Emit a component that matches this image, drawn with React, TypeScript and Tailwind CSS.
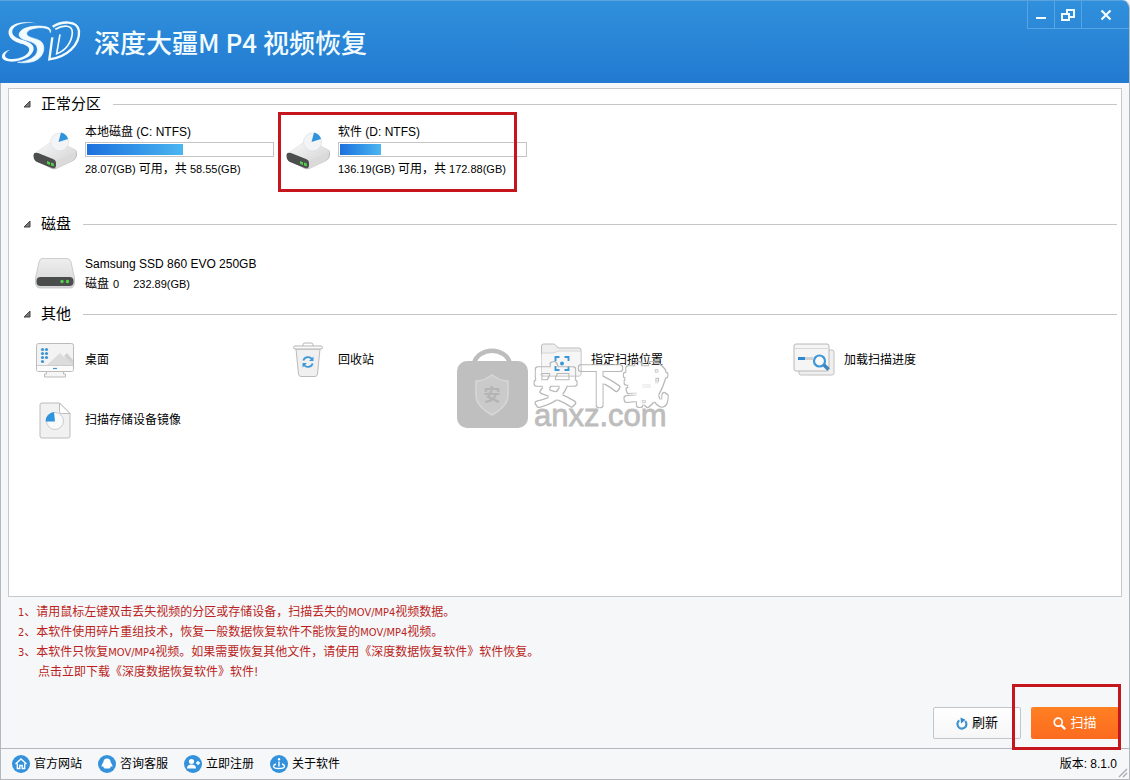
import React from 'react';

interface SectionProps {
  title: string;
  className?: string;
  children: React.ReactNode;
}

interface PartitionProps {
  name: string;
  free: string;
  total: string;
  percent: number;
  marked?: boolean;
}

const partitions: PartitionProps[] = [
  { name: '本地磁盘 (C: NTFS)', free: '28.07(GB)', total: '58.55(GB)', percent: 52 },
  { name: '软件 (D: NTFS)', free: '136.19(GB)', total: '172.88(GB)', percent: 22, marked: true },
];

const Small = ({ children }: { children: React.ReactNode }) => (
  <span className="text-[11px] leading-4">{children}</span>
);

const Logo = () => (
  <svg width="82" height="46" viewBox="0 0 246 138" className="shrink-0" fill="#f2fcff" aria-hidden="true">
    <path d="M109 13C83 7 50 8 34 22C20 35 24 55 42 65C50 70 60 73 70 76C84 81 91 88 86 98C79 111 58 119 39 120C23 121 12 116 16 106C18 100 24 96 30 92C14 95 4 105 6 115C9 127 30 130 49 127C76 123 99 108 101 91C102 77 90 70 75 65C58 60 43 55 38 45C33 32 43 20 62 15C77 11 94 12 109 13Z" />
    <path
      d="M151 41C155 30 147 24 130 22C103 19 70 24 60 39C52 52 62 59 79 64C101 70 114 77 112 95C110 113 87 127 53 130C83 134 110 129 123 112C135 96 134 75 121 66C111 59 96 58 87 53C76 47 78 37 93 31C112 24 137 25 145 31C149 34 150 37 151 41Z"
      stroke="#f2fcff"
      strokeWidth="2"
    />
    <g fill="none" stroke="#f2fcff">
      <path d="M158 23C184 7 232 2 237 36C240 78 200 115 148 121L157 55" strokeWidth="7" />
      <path d="M166 31C190 17 218 17 217 42C215 70 197 95 170 104L180 46" strokeWidth="5" />
    </g>
  </svg>
);

const PartitionIcon = () => (
  <svg width="44" height="38" viewBox="0 0 44 38" aria-hidden="true">
    <defs>
      <linearGradient id="driveTop" x1="0" y1="0" x2="1" y2="1">
        <stop offset="0" stopColor="#fafafa" />
        <stop offset="1" stopColor="#d2d2d2" />
      </linearGradient>
    </defs>
    <path d="M2 21L18 10Q21 8 25 9L41 17Q44 18 44 21V24Q43 27 40 29L23 37Q20 38 17 36L3 29Q1 27 1 24Z" fill="#bdbdbd" />
    <path d="M2 21L18 10Q21 8 25 9L41 17Q44 19 43 22L23 32Q20 33 18 31L4 24Q2 23 2 21Z" fill="url(#driveTop)" />
    <path d="M23 29L43 20V24Q42 27 39 29L23 37Z" fill="#dadada" />
    <path d="M0.500 23Q0.500 20 5 21L20 27Q23 28 23 31V34Q22 37 19 36L4 30Q0.500 28 0.500 24Z" fill="#4b4e4c" />
    <path d="M14 29l3 1.200v2.800l-3-1.200zM18 30.600l2.800 1v2.800l-2.800-1z" fill="#4fd14b" />
    <circle cx="26.500" cy="10" r="9" fill="#f3f4f5" stroke="#dcdcdc" strokeWidth="0.700" />
    <path d="M25.500 10L28 0.500Q34 2 35 7Z" fill="#2f94dc" />
  </svg>
);

const DiskIcon = () => (
  <svg width="44" height="32" viewBox="0 0 44 32" aria-hidden="true">
    <defs>
      <linearGradient id="diskTop" x1="0" y1="0" x2="0" y2="1">
        <stop offset="0" stopColor="#eeeeee" />
        <stop offset="1" stopColor="#d5d5d5" />
      </linearGradient>
    </defs>
    <path d="M9 0.500H34Q37 0.500 38 4L41.500 20V25Q41 30 37 30H7Q3 30 2.500 25V20L6 4Q7 0.500 9 0.500Z" fill="url(#diskTop)" stroke="#c3c3c3" strokeWidth="0.800" />
    <rect x="3.500" y="19" width="37" height="9" rx="4" fill="#4a4d4b" />
    <circle cx="29" cy="23.500" r="1.700" fill="#4fd14b" />
    <circle cx="34.500" cy="23.500" r="1.700" fill="#4fd14b" />
  </svg>
);

const DesktopIcon = () => (
  <svg width="40" height="36" viewBox="0 0 40 36" aria-hidden="true">
    <rect x="1.500" y="1.500" width="37" height="28" rx="2" fill="#f3f3f3" stroke="#bbbbbb" />
    <path d="M13 22L25 11l5 5 2-2 6 6v3H12z" fill="#dcdcdc" />
    <path d="M29 14l3-3 6 7v4z" fill="#d2d2d2" />
    <path d="M2 24h36v4q0 1-1 1H3q-1 0-1-1z" fill="#fbfbfb" />
    <path d="M2 23.500h36" stroke="#cccccc" />
    <path d="M18 26.500h4" stroke="#3d97d6" strokeWidth="1.200" />
    <path d="M11.500 30v2h-2v3h21v-3h-2v-2" fill="#f5f5f5" stroke="#bbbbbb" />
    <g fill="#3d97d6">
      <circle cx="7.500" cy="7.500" r="1.600" />
      <circle cx="11.500" cy="7.500" r="1.600" />
      <circle cx="7.500" cy="11.500" r="1.600" />
      <circle cx="11.500" cy="11.500" r="1.600" />
      <circle cx="7.500" cy="15.500" r="1.600" />
      <circle cx="11.500" cy="15.500" r="1.600" />
      <circle cx="7.500" cy="19.500" r="1.600" />
    </g>
  </svg>
);

const RecycleIcon = () => (
  <svg width="32" height="36" viewBox="0 0 32 36" aria-hidden="true">
    <path d="M11 4V2.500Q11 1 13 1h6q2 0 2 1.500V4" fill="none" stroke="#b5b5b5" />
    <path d="M4 7L6.500 32q.3 2.500 2.500 2.500h14q2.200 0 2.500-2.500L28 7z" fill="#f0f0f0" stroke="#bbbbbb" />
    <rect x="1.500" y="4" width="29" height="3" rx="1.500" fill="#fafafa" stroke="#b5b5b5" />
    <g fill="none" stroke="#3d97d6" strokeWidth="1.800">
      <path d="M11.300 18.500a5 5 0 0 1 8.700-1.500" />
      <path d="M20.700 21.500a5 5 0 0 1-8.700 1.500" />
    </g>
    <path d="M21.500 14.500v4.500h-4.500zM10.500 25.500V21H15z" fill="#3d97d6" />
  </svg>
);

const FolderIcon = () => (
  <svg width="42" height="34" viewBox="0 0 42 34" aria-hidden="true">
    <path d="M1.500 31V3q0-2 2-2h10q1.500 0 2.500 1.500l2 2.500h21q2 0 2 2v24q0 2-2 2h-36q-2 0-2-2z" fill="#eeeeee" stroke="#bcbcbc" />
    <path d="M1.500 31V12q0-2 2-2h9q2 0 3.500-1t3-1h20q2 0 2 1v22q0 2-2 2h-36q-2 0-2-2z" fill="#f6f6f6" stroke="#d6d6d6" />
    <path d="M15.500 18v-4h4M24.500 14h4v4M28.500 23v4h-4M19.500 27h-4v-4" fill="none" stroke="#3d97d6" strokeWidth="1.900" />
    <circle cx="22" cy="20.500" r="2" fill="#3d97d6" />
  </svg>
);

const ProgressIcon = () => (
  <svg width="42" height="34" viewBox="0 0 42 34" aria-hidden="true">
    <rect x="6" y="7" width="35" height="25" rx="2" fill="#efefef" stroke="#c0c0c0" />
    <rect x="1" y="1" width="35" height="27" rx="2" fill="#f5f5f5" stroke="#b8b8b8" />
    <path d="M1.500 5.500h34" stroke="#d8d8d8" />
    <path d="M5 15.500h7" stroke="#2f87cf" strokeWidth="3" />
    <path d="M12 15.500h8" stroke="#d2d2d2" strokeWidth="3" />
    <circle cx="26.500" cy="18" r="5.500" fill="#fafafa" stroke="#3d97d6" strokeWidth="2.200" />
    <path d="M31 22l4.500 4.500" stroke="#3d86bd" strokeWidth="3.600" />
  </svg>
);

const ImageFileIcon = () => (
  <svg width="32" height="37" viewBox="0 0 32 37" aria-hidden="true">
    <path d="M1 3q0-2 2-2h17.500L31 11.500V34q0 2-2 2H3q-2 0-2-2z" fill="#f1f1f1" stroke="#bcbcbc" />
    <path d="M20.500 1v8.500q0 2 2 2H31z" fill="#ffffff" stroke="#bcbcbc" />
    <circle cx="16" cy="19" r="8.500" fill="#fafafa" stroke="#c8ccd0" />
    <path d="M16 19.500H6.500A9.500 9.500 0 0 1 15 10z" fill="#2f94dc" />
  </svg>
);

const others = [
  { label: '桌面', icon: <DesktopIcon /> },
  { label: '回收站', icon: <RecycleIcon /> },
  { label: '指定扫描位置', icon: <FolderIcon /> },
  { label: '加载扫描进度', icon: <ProgressIcon /> },
  { label: '扫描存储设备镜像', icon: <ImageFileIcon /> },
];

const footerLinks = [
  {
    label: '官方网站',
    glyph: (
      <path d="M3.500 9L9 4l5.500 5M5.300 8.500v5h2.500v-3h2.400v3h2.500v-5" fill="none" stroke="#fff" strokeWidth="1.300" />
    ),
  },
  {
    label: '咨询客服',
    glyph: <path d="M9 3.500q3.500 0 3.700 4 2 2 1.800 4.300-1-.3-1.500-.6-.6 1.600-1.500 2.300H6.500Q5.600 12.800 5 11.200q-.6.400-1.500.6-.2-2.300 1.800-4.300.2-4 3.700-4z" fill="#fff" />,
  },
  {
    label: '立即注册',
    glyph: (
      <g fill="#fff">
        <circle cx="7.500" cy="6.500" r="2.600" />
        <path d="M3 13.500q0-4 4.500-4t4.500 4zM12 7.300h1.300V6h1.400v1.300H16v1.400h-1.300V10h-1.400V8.700H12z" />
      </g>
    ),
  },
  {
    label: '关于软件',
    glyph: (
      <g fill="none" stroke="#fff" strokeWidth="1.400">
        <path d="M9 6.500v5M6 9q-2.500.8-2.500 2.200 0 2.300 5.500 2.300t5.500-2.300Q14.500 9.800 12 9" />
        <circle cx="9" cy="4.300" r="0.600" fill="#fff" />
      </g>
    ),
  },
];

const Section = ({ title, className = '', children }: SectionProps) => (
  <section className={className}>
    <h2 className="flex h-5 items-center pr-1">
      <button type="button" className="flex items-center gap-2.5 pl-3 text-[15px] leading-5">
        <svg width="8" height="8" viewBox="0 0 8 8" aria-hidden="true" className="ml-0.5">
          <path d="M7 1v6H1z" fill="#777777" stroke="#444444" />
        </svg>
        {title}
      </button>
      <span className="ml-3 h-px flex-1 bg-[#c6c6c6]" />
    </h2>
    <div className="grid grid-cols-[repeat(auto-fill,253px)] pl-6">{children}</div>
  </section>
);

const Partition = ({ name, free, total, percent, marked }: PartitionProps) => (
  <div className="relative">
    <button type="button" className="flex items-center gap-2 text-left text-xs">
      <PartitionIcon />
      <span className="block">
        <span className="block leading-5">{name}</span>
        <span
          role="progressbar"
          aria-label={name}
          aria-valuenow={percent}
          className="block h-[15px] w-[189px] border border-[#c4c4c4] bg-white p-px"
        >
          <span
            className="block h-full bg-linear-to-r from-[#1d70dd] to-[#4bb5f0]"
            style={{ width: `${percent}%` }}
          />
        </span>
        <span className="mt-0.5 block leading-5">
          <Small>{free} </Small>可用，共<Small> {total}</Small>
        </span>
      </span>
    </button>
    {marked && (
      <span className="pointer-events-none absolute -top-2.5 -left-2 z-10 h-20 w-[239px] border-3 border-[#c4161c]" />
    )}
  </div>
);

const Watermark = () => (
  <div className="pointer-events-none absolute inset-0 flex items-center justify-center">
    <svg width="218" height="88" viewBox="0 0 218 88" role="img" aria-label="安下载 anxz.com">
      <defs>
        <filter id="outline" x="-10%" y="-10%" width="120%" height="120%">
          <feMorphology in="SourceGraphic" operator="erode" radius="1" result="inner" />
          <feComposite in="SourceGraphic" in2="inner" operator="out" />
        </filter>
      </defs>
      <path d="M18 17a18.500 16 0 0 1 36 0" fill="none" stroke="#bdbdbd" strokeWidth="4.500" />
      <rect x="1" y="15" width="71" height="67" rx="10" fill="#bfbfbf" />
      <path d="M36 29q8 6 16 6v14q0 11-16 20-16-9-16-20V35q8 0 16-6z" fill="#cacaca" stroke="#d8d8d8" strokeWidth="1.500" />
      <text x="36" y="55" textAnchor="middle" fontSize="17" fontWeight="700" fill="#b4b4b4" fontFamily="'Noto Sans CJK SC', sans-serif">
        安
      </text>
      <text
        x="77"
        y="56"
        fontSize="45"
        fontWeight="300"
        fill="#b8b8b8"
        stroke="#b8b8b8"
        strokeWidth="5.500"
        strokeLinejoin="round"
        filter="url(#outline)"
        fontFamily="'Noto Sans CJK SC', sans-serif"
      >
        安下载
      </text>
      <text x="78" y="80" fontSize="31" fill="#bdbdbd" stroke="#bdbdbd" strokeWidth="0.800" fontFamily="'Liberation Sans', sans-serif">
        anxz.com
      </text>
    </svg>
  </div>
);

export default function App() {
  return (
    <div className="relative flex min-h-screen flex-col bg-[#f5f7f9] font-['Liberation_Sans','Noto_Sans_CJK_SC',sans-serif] text-xs text-black">
      <header className="flex h-[83px] items-start justify-between rounded-tr-lg border-t border-r border-t-[#5aa3dc] border-r-[#b4bcc4] bg-linear-to-b from-[#3090dc] to-[#227ad1]">
        <div className="flex h-full items-center gap-3">
          <Logo />
          <h1 className="font-['Noto_Sans_CJK_SC',sans-serif] text-[26px] leading-none font-medium text-[#f2fcff]">
            深度大疆M P4 视频恢复
          </h1>
        </div>
        <div className="flex h-7 divide-x divide-[#56a6e4] border-b border-l border-[#56a6e4]">
          <button type="button" aria-label="最小化" className="flex w-[27px] items-center justify-center">
            <svg width="12" height="12" viewBox="0 0 12 12">
              <path d="M1 9h10" stroke="#f2fcff" strokeWidth="2" />
            </svg>
          </button>
          <button type="button" aria-label="还原" className="flex w-[27px] items-center justify-center">
            <svg width="14" height="12" viewBox="0 0 14 12" fill="none" stroke="#f2fcff" strokeWidth="2">
              <path d="M6 4V1h7v7H9" />
              <path d="M1 5h7v6H1z" />
            </svg>
          </button>
          <button type="button" aria-label="关闭" className="flex w-[47px] items-center justify-center">
            <svg width="12" height="12" viewBox="0 0 12 12">
              <path d="M1.500 1.500l9 9M10.500 1.500l-9 9" stroke="#f2fcff" strokeWidth="2.200" />
            </svg>
          </button>
        </div>
      </header>

      <div className="flex flex-1 flex-col border-x border-b border-[#b4b8bc]">
        <main className="mx-[7px] mt-[5px] flex-1 border border-[#c6cacd] bg-white pt-[5px]">
          <Section title="正常分区">
            {partitions.map((p) => (
              <div key={p.name} className="pt-2">
                <Partition {...p} />
              </div>
            ))}
          </Section>

          <Section title="磁盘" className="mt-[35px]">
            <button type="button" className="mt-5 flex items-center gap-2 text-left">
              <DiskIcon />
              <span className="whitespace-nowrap leading-5">
                <span className="block">Samsung SSD 860 EVO 250GB</span>
                <span className="flex items-baseline">
                  磁盘<span className="ml-1 text-[11px]">0</span>
                  <span className="ml-3.5 text-[11px]">232.89(GB)</span>
                </span>
              </span>
            </button>
          </Section>

          <Section title="其他" className="mt-2.5">
            {others.map((item) => (
              <button key={item.label} type="button" className="flex h-15 items-center gap-2 pt-3 text-left">
                <span className="flex w-11 justify-center">{item.icon}</span>
                {item.label}
              </button>
            ))}
          </Section>
        </main>

        <div className="px-[17px] pt-[5px] font-['DejaVu_Sans_Condensed','Noto_Sans_CJK_SC',sans-serif] leading-5 text-[#bb1f22]">
          <p>
            <Small>1</Small>、请用鼠标左键双击丢失视频的分区或存储设备，扫描丢失的<Small>MOV/MP4</Small>视频数据。
          </p>
          <p>
            <Small>2</Small>、本软件使用碎片重组技术，恢复一般数据恢复软件不能恢复的<Small>MOV/MP4</Small>视频。
          </p>
          <p>
            <Small>3</Small>、本软件只恢复<Small>MOV/MP4</Small>视频。如果需要恢复其他文件，请使用《深度数据恢复软件》软件恢复。
          </p>
          <a href="#download" className="block w-fit pl-5">
            点击立即下载《深度数据恢复软件》软件!
          </a>
        </div>

        <div className="mt-[25px] mb-[9px] flex justify-end gap-2.5 pr-2.5 text-[13px]">
          <button
            type="button"
            className="flex h-8 w-[88px] items-center justify-center gap-1 rounded-xs border border-[#c2c6c9] bg-linear-to-b from-white to-[#f6f6f6]"
          >
            <svg width="12" height="13" viewBox="0 0 12 13" aria-hidden="true">
              <path d="M9.200 4A4.500 4.500 0 1 1 3.300 3.400" fill="none" stroke="#3f93cf" strokeWidth="2.200" />
              <path d="M4.500 0.500L9.500 2.800 5 6.500z" fill="#3488c8" />
            </svg>
            刷新
          </button>
          <div className="relative">
            <button
              type="button"
              className="flex h-8 w-[88px] items-center justify-center gap-1 rounded-xs bg-linear-to-b from-[#ff8022] to-[#fb6a20] text-white"
            >
              <svg width="13" height="13" viewBox="0 0 13 13" fill="none" stroke="#ffffff" aria-hidden="true">
                <circle cx="5.200" cy="5.200" r="4" strokeWidth="1.700" />
                <path d="M8.200 8.200l4 4" strokeWidth="2.300" />
              </svg>
              扫描
            </button>
            <span className="pointer-events-none absolute -top-[23px] -right-0.5 -bottom-[11px] -left-[19px] border-3 border-[#c4161c]" />
          </div>
        </div>

        <footer className="flex h-[31px] items-center justify-between border-t border-[#b4b8bc] pr-3 pl-[11px]">
          <nav className="flex gap-4">
            {footerLinks.map((link) => (
              <a key={link.label} href="#footer" className="flex items-center gap-1">
                <svg width="18" height="18" viewBox="0 0 18 18" aria-hidden="true">
                  <circle cx="9" cy="9" r="9" fill="#3492dc" />
                  {link.glyph}
                </svg>
                {link.label}
              </a>
            ))}
          </nav>
          <span>版本: 8.1.0</span>
          <svg width="10" height="10" viewBox="0 0 10 10" aria-hidden="true" className="absolute right-0.5 bottom-0.5">
            <path d="M1 9l8-8M5 9l4-4" stroke="#a8acb0" strokeWidth="1.300" />
          </svg>
        </footer>
      </div>

      <Watermark />
    </div>
  );
}
